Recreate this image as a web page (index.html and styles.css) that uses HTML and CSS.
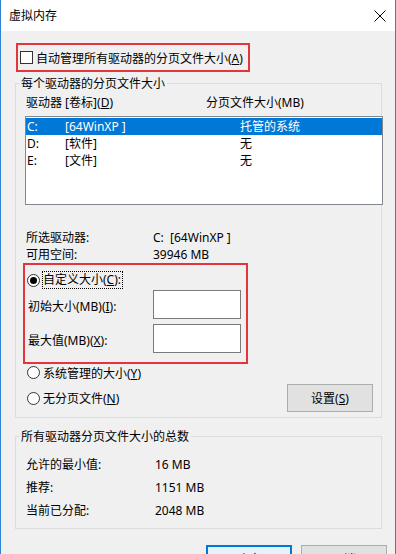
FILE: index.html
```html
<!DOCTYPE html>
<html lang="zh-CN">
<head>
<meta charset="utf-8">
<title>虚拟内存</title>
<link rel="stylesheet" href="styles.css">
</head>
<body>
<div class="window">
  <div class="titlebar">
    <span class="title">虚拟内存</span>
    <svg class="close" width="12" height="12" viewBox="0 0 12 12"><path d="M0.5 0.5L11.5 11.5M11.5 0.5L0.5 11.5" stroke="#000" stroke-width="1"/></svg>
  </div>
  <div class="content">
    <div class="mark auto-manage">
      <span class="checkbox"></span>
      <span>自动管理所有驱动器的分页文件大小(<u>A</u>)</span>
    </div>

    <fieldset class="group drives">
      <legend>每个驱动器的分页文件大小</legend>
      <div class="list-head">
        <span class="head-drive">驱动器 [卷标](<u>D</u>)</span>
        <span>分页文件大小(MB)</span>
      </div>
      <div class="listbox">
        <div class="list-row selected"><span class="col-letter">C:</span><span class="col-label">[64WinXP ]</span><span>托管的系统</span></div>
        <div class="list-row"><span class="col-letter">D:</span><span class="col-label">[软件]</span><span>无</span></div>
        <div class="list-row"><span class="col-letter">E:</span><span class="col-label">[文件]</span><span>无</span></div>
      </div>
      <div class="info">
        <div class="info-row"><span class="info-key">所选驱动器:</span><span>C:&nbsp; [64WinXP ]</span></div>
        <div class="info-row"><span class="info-key">可用空间:</span><span>39946 MB</span></div>
      </div>
      <div class="mark custom">
        <div class="radio-row first"><span class="radio checked"></span><span class="focus">自定义大小(<u>C</u>):</span></div>
        <div class="size-row"><span class="size-label">初始大小(MB)(<u>I</u>):</span><span class="textbox"></span></div>
        <div class="size-row second"><span class="size-label">最大值(MB)(<u>X</u>):</span><span class="textbox"></span></div>
      </div>
      <div class="radio-row system"><span class="radio"></span><span>系统管理的大小(<u>Y</u>)</span></div>
      <div class="none-row">
        <div class="radio-row"><span class="radio"></span><span>无分页文件(<u>N</u>)</span></div>
        <button class="btn set">设置(<u>S</u>)</button>
      </div>
    </fieldset>

    <fieldset class="group totals">
      <legend>所有驱动器分页文件大小的总数</legend>
      <div class="total-row first"><span class="total-key">允许的最小值:</span><span>16 MB</span></div>
      <div class="total-row"><span class="total-key">推荐:</span><span>1151 MB</span></div>
      <div class="total-row"><span class="total-key">当前已分配:</span><span>2048 MB</span></div>
    </fieldset>

    <div class="actions">
      <button class="btn ok">确定</button>
      <button class="btn">取消</button>
    </div>
  </div>
</div>
</body>
</html>
```

FILE: styles.css
```css
body {
  margin: 0;
  background: #fff;
  font-family: "Noto Sans", "Noto Sans CJK SC", sans-serif;
  font-size: 12px;
  color: #000;
}
.window {
  width: 396px;
  height: 554px;
  box-sizing: border-box;
  border-left: 1px solid #2f83d3;
  border-right: 1px solid #2f83d3;
  background: #f0f0f0;
  overflow: hidden;
}
.titlebar {
  height: 31px;
  background: #fff;
  display: flex;
  align-items: center;
  justify-content: space-between;
  padding: 0 9px 0 8px;
}
.title {
  line-height: 17px;
}
.close {
  display: block;
  margin-top: 1px;
}
.content {
  padding: 12px 0 0 14px;
}
.mark {
  border: 2px solid #e3353d;
  box-sizing: border-box;
}
.auto-manage {
  margin-left: 1px;
  width: 234px;
  height: 29px;
  display: flex;
  align-items: center;
  gap: 3px;
  padding-left: 2px;
}
.checkbox {
  width: 13px;
  height: 13px;
  box-sizing: border-box;
  border: 1px solid #333;
  background: #fff;
}
.group {
  margin: 3px 0 0;
  padding: 0;
  width: 367px;
  box-sizing: border-box;
  min-width: 0;
  border: 1px solid #dcdcdc;
}
.group legend {
  margin-left: 3px;
  padding: 0 2px;
  line-height: 17px;
}
.drives {
  padding-bottom: 5px;
}
.list-head {
  display: flex;
  margin: 2px 0 0 10px;
  line-height: 17px;
}
.head-drive {
  width: 180px;
}
.listbox {
  margin: 5px 0 0 9px;
  width: 358px;
  height: 89px;
  box-sizing: border-box;
  border: 1px solid #828790;
  background: #fff;
  padding-top: 1px;
}
.list-row {
  display: flex;
  height: 17px;
  line-height: 17px;
  padding-left: 1px;
}
.list-row.selected {
  background: #0078d7;
  color: #fff;
}
.col-letter {
  width: 38px;
}
.col-label {
  width: 175px;
}
.info {
  margin: 24px 0 0 10px;
}
.info-row {
  display: flex;
  line-height: 17px;
}
.info-key {
  width: 127px;
}
.custom {
  margin-left: 7px;
  width: 225px;
  height: 101px;
  padding-left: 2px;
}
.radio-row {
  display: flex;
  align-items: center;
  gap: 3px;
  height: 17px;
}
.radio-row.first {
  height: 20px;
  margin-top: 5px;
}
.radio {
  width: 13px;
  height: 13px;
  box-sizing: border-box;
  border: 1px solid #333;
  border-radius: 50%;
  background: #fff;
  display: flex;
  align-items: center;
  justify-content: center;
}
.radio.checked::after {
  content: "";
  width: 7px;
  height: 7px;
  border-radius: 50%;
  background: #000;
}
.focus {
  outline: 1px dotted #000;
  line-height: 16px;
  padding-right: 1px;
}
.size-row {
  display: flex;
  align-items: center;
  height: 29px;
  margin-left: 1px;
}
.size-row.second {
  margin-top: 5px;
}
.size-label {
  width: 125px;
  padding-top: 3px;
}
.textbox {
  width: 88px;
  height: 29px;
  box-sizing: border-box;
  border: 1px solid #7a7a7a;
  background: #fff;
}
.system {
  margin-left: 11px;
}
.none-row {
  display: flex;
  align-items: center;
  justify-content: space-between;
  margin-top: 3px;
  padding: 0 8px 0 11px;
  height: 28px;
}
.btn {
  font: inherit;
  color: #000;
  width: 86px;
  height: 28px;
  padding: 0;
  background: #e1e1e1;
  border: 1px solid #adadad;
}
.totals {
  margin-top: 10px;
  padding-bottom: 6px;
}
.total-row {
  display: flex;
  height: 23px;
  line-height: 23px;
  margin-left: 10px;
}
.total-row.first {
  margin-top: 8px;
}
.total-key {
  width: 129px;
}
.actions {
  display: flex;
  justify-content: flex-end;
  gap: 9px;
  margin-top: 16px;
  padding-right: 8px;
}
.btn.ok {
  border: 2px solid #0078d7;
  background: #e5f1fb;
}
```
